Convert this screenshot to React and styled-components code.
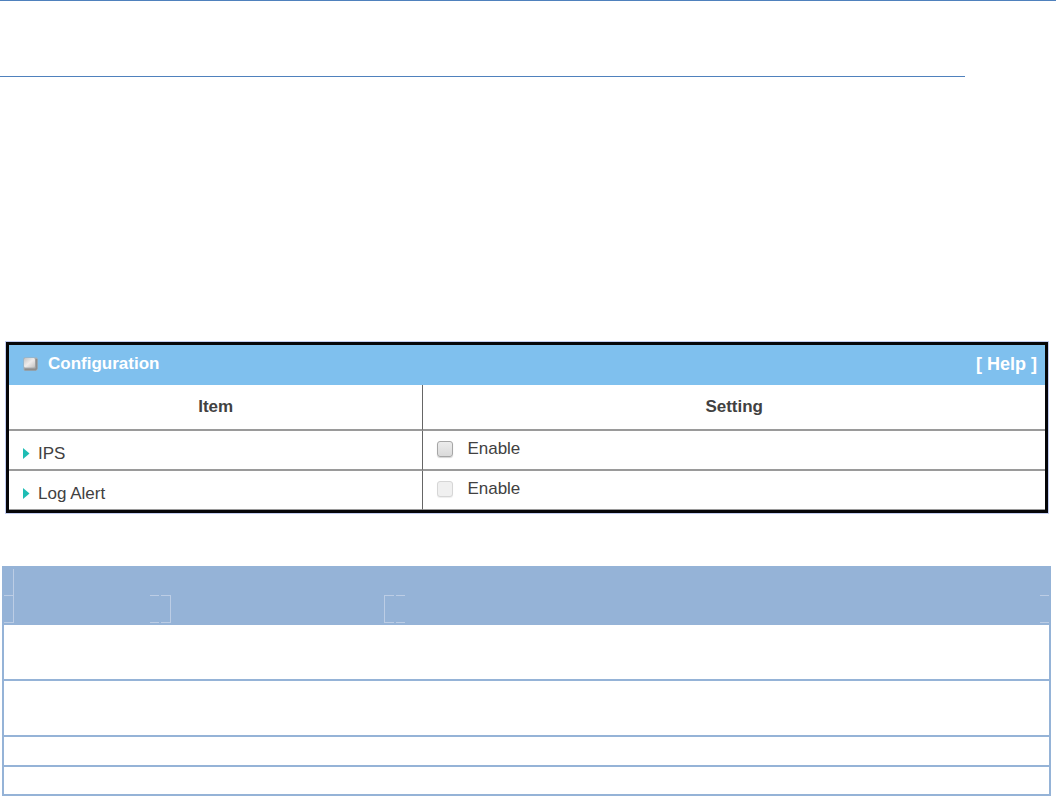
import React from "react";
import styled, { createGlobalStyle } from "styled-components";

const settings = [
	{ id: "ips", name: "IPS", disabled: false },
	{ id: "log-alert", name: "Log Alert", disabled: true },
];

const App = () => {
	return (
		<Page>
			<GlobalStyle />
			<PageHeader />
			<SectionRule />
			<Panel>
				<PanelHeader>
					<PanelTitle>
						<TitleIcon />
						Configuration
					</PanelTitle>
					<HelpLink href="#help">[ Help ]</HelpLink>
				</PanelHeader>
				<ConfigTable>
					<thead>
						<tr>
							<ItemHeading>Item</ItemHeading>
							<SettingHeading>Setting</SettingHeading>
						</tr>
					</thead>
					<tbody>
						{settings.map((setting) => (
							<tr key={setting.id}>
								<ItemCell>
									<ItemName>
										<ArrowIcon />
										{setting.name}
									</ItemName>
								</ItemCell>
								<SettingCell>
									<EnableLabel htmlFor={setting.id}>
										<Checkbox id={setting.id} type="checkbox" disabled={setting.disabled} />
										Enable
									</EnableLabel>
								</SettingCell>
							</tr>
						))}
					</tbody>
				</ConfigTable>
			</Panel>
			<DescriptionTable>
				<colgroup>
					<Col $width="15%" />
					<Col $width="22.4%" />
					<Col />
				</colgroup>
				<thead>
					<tr>
						<BandCell colSpan={3}>
							<BandTop>
								<Guide />
							</BandTop>
						</BandCell>
					</tr>
					<tr>
						<BandCell>
							<BandRow>
								<Bracket $side="right" />
								<Bracket />
							</BandRow>
						</BandCell>
						<BandCell>
							<BandRow>
								<Bracket $side="right" />
								<Bracket $side="left" />
							</BandRow>
						</BandCell>
						<BandCell>
							<BandRow>
								<Bracket />
								<Bracket />
							</BandRow>
						</BandCell>
					</tr>
				</thead>
				<tbody>
					<tr><BodyCell colSpan={3} $height={54} /></tr>
					<tr><BodyCell colSpan={3} $height={54} /></tr>
					<tr><BodyCell colSpan={3} $height={28} /></tr>
					<tr><BodyCell colSpan={3} $height={27} /></tr>
				</tbody>
			</DescriptionTable>
		</Page>
	);
};
export default App;

const TitleIcon = () => (
	<IconSvg width="16" height="14" viewBox="0 0 16 14" aria-hidden="true">
		<defs>
			<linearGradient id="key" x1="0" y1="0" x2="1" y2="1">
				<stop offset="0" stopColor="#c4c4c4" />
				<stop offset="0.5" stopColor="#efeceb" />
				<stop offset="1" stopColor="#c3c1c0" />
			</linearGradient>
		</defs>
		<rect x="0.5" y="0.5" width="14" height="13" rx="1" fill="#a9adb0" />
		<path d="M1.5 12.5h11l1-1V2" fill="none" stroke="#8f8d8b" strokeWidth="1.8" />
		<rect x="1" y="1" width="11" height="9.5" rx="1.5" fill="url(#key)" />
	</IconSvg>
);

const ArrowIcon = () => (
	<IconSvg width="7" height="12" viewBox="0 0 7 12" aria-hidden="true">
		<path d="M0 0L6.5 5.5L0 11Z" fill="#1fbdb4" />
	</IconSvg>
);

const GlobalStyle = createGlobalStyle`
	body {
		margin: 0;
		background: #ffffff;
	}
`;

const IconSvg = styled.svg`
	display: block;
	flex: none;
`;

const Page = styled.main`
	font-family: "Liberation Sans", Arial, sans-serif;
	font-size: 17px;
	line-height: 20px;
	color: #414141;
`;

const PageHeader = styled.header`
	box-sizing: border-box;
	height: 76px;
	border-top: 1px solid #4f81bd;
`;

const SectionRule = styled.hr`
	height: 1px;
	margin: 0 91px 265px 0;
	border: 0;
	background: #4f81bd;
`;

const Panel = styled.section`
	margin: 0 8px 53px 6px;
	border: 3px solid #050608;
	box-shadow: 0 0 0 1px #c3cdf0;
`;

const PanelHeader = styled.div`
	display: flex;
	align-items: center;
	justify-content: space-between;
	box-sizing: border-box;
	height: 40px;
	padding: 0 8px 2px 14px;
	background: #7fc0ee;
	color: #ffffff;
`;

const PanelTitle = styled.h2`
	display: flex;
	align-items: center;
	gap: 9px;
	margin: 0;
	font-size: 17px;
	font-weight: 700;
`;

const HelpLink = styled.a`
	color: inherit;
	font-size: 18px;
	font-weight: 700;
	text-decoration: none;
`;

const ConfigTable = styled.table`
	width: 100%;
	table-layout: fixed;
	border-collapse: separate;
	border-spacing: 0;

	tr:last-child td {
		border-bottom-width: 1px;
	}
`;

const ItemHeading = styled.th`
	box-sizing: border-box;
	width: 40%;
	height: 46px;
	padding: 0;
	border-bottom: 2px solid #9a9a9a;
	border-right: 1px solid #666666;
`;

const SettingHeading = styled(ItemHeading)`
	width: auto;
	border-right: 0;
`;

const ItemCell = styled.td`
	height: 38px;
	padding: 0;
	border-bottom: 2px solid #9a9a9a;
	border-right: 1px solid #666666;
`;

const SettingCell = styled(ItemCell)`
	border-right: 0;
`;

const ItemName = styled.div`
	display: flex;
	align-items: center;
	gap: 8px;
	padding: 8px 0 0 14px;
`;

const EnableLabel = styled.label`
	display: flex;
	align-items: center;
	gap: 14px;
	padding: 0 0 2px 14px;
`;

const Checkbox = styled.input`
	appearance: none;
	box-sizing: border-box;
	width: 16px;
	height: 16px;
	margin: 0;
	border: 1px solid #a6a6a6;
	border-radius: 3px;
	background: linear-gradient(#ececec, #dadada);
	box-shadow: 0 1px 1px #d4d4d4;

	&:checked {
		background: #8a8a8a;
	}

	&:disabled {
		border-color: #d6d6d6;
		background: #f0f0f0;
		box-shadow: 0 1px 1px #eeeeee;
	}
`;

const DescriptionTable = styled.table`
	width: calc(100% - 7px);
	margin-left: 2px;
	table-layout: fixed;
	border-collapse: collapse;
	border: 2px solid #95b3d7;
`;

const Col = styled.col`
	width: ${(props) => props.$width || "auto"};
`;

const BandCell = styled.th`
	padding: 0;
	border-left: 2px solid #95b3d7;
	border-right: 2px solid #95b3d7;
	background: #95b3d7;
`;

const BandTop = styled.div`
	display: flex;
	height: 27px;
	padding-top: 1px;
	box-sizing: border-box;
`;

const BandRow = styled.div`
	display: flex;
	justify-content: space-between;
	height: 28px;
`;

const Guide = styled.span`
	box-sizing: border-box;
	width: 10px;
	border-right: 1px solid #bccde5;
`;

const Bracket = styled.span`
	box-sizing: border-box;
	width: ${(props) => (props.$side ? "10px" : "9px")};
	border: 0 solid #bccde5;
	border-top-width: 1px;
	border-bottom-width: 1px;
	border-left-width: ${(props) => (props.$side === "left" ? "1px" : "0")};
	border-right-width: ${(props) => (props.$side === "right" ? "1px" : "0")};
`;

const BodyCell = styled.td`
	height: ${(props) => props.$height}px;
	padding: 0;
	border: 2px solid #95b3d7;
`;
